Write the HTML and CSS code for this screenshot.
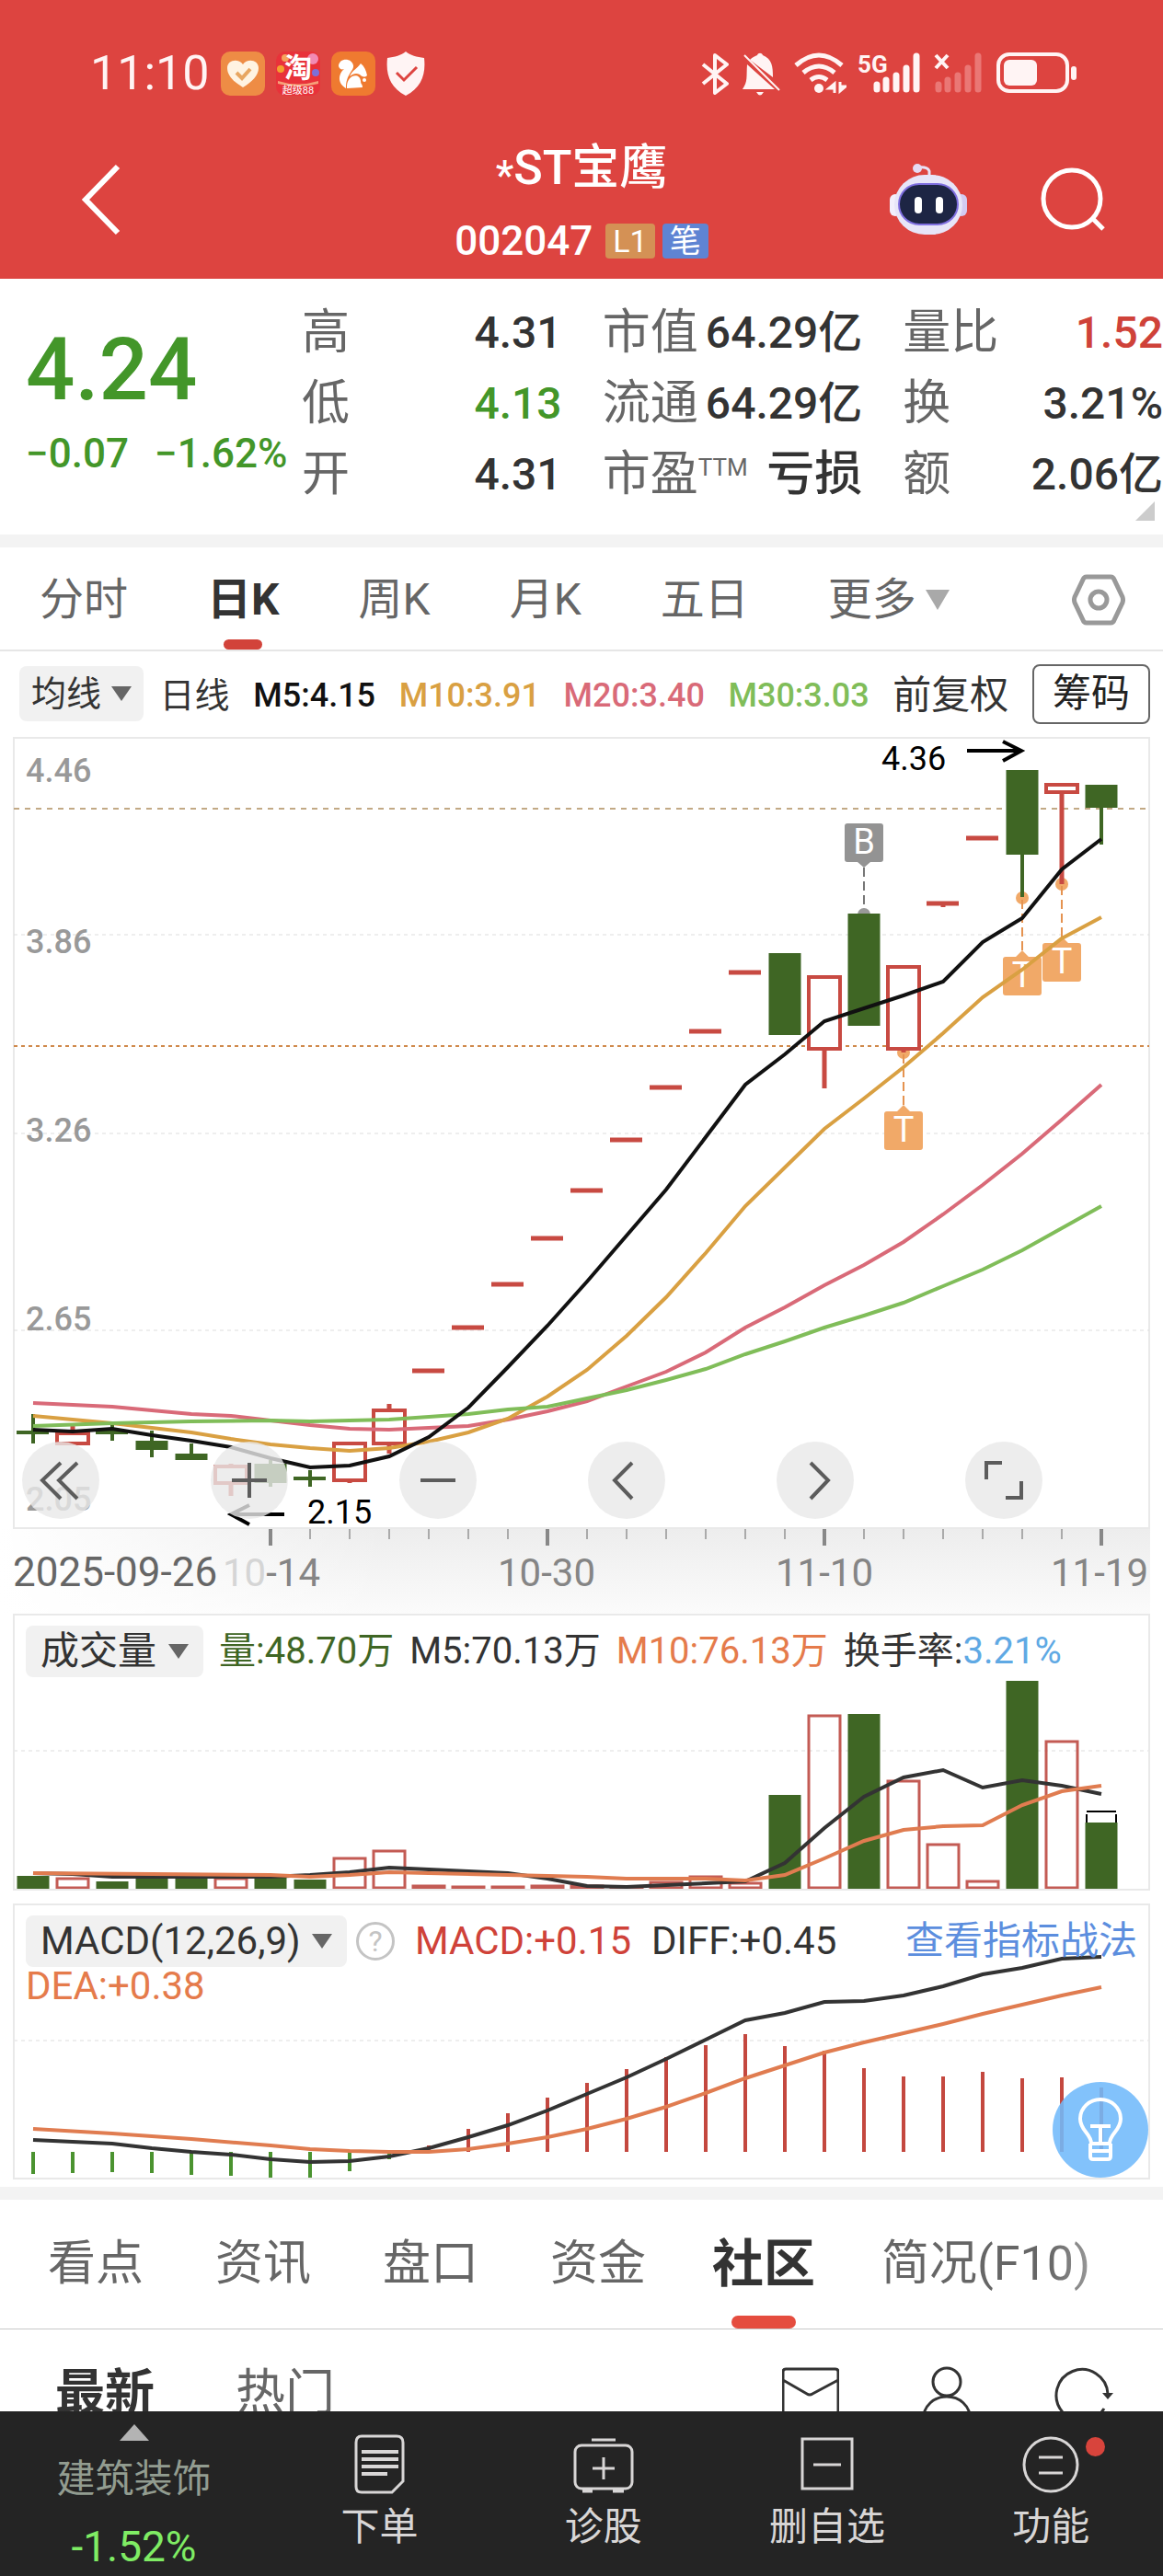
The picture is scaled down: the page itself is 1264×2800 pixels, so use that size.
FILE: index.html
```html
<!DOCTYPE html>
<html lang="zh-CN">
<head>
  <meta charset="UTF-8">
  <meta name="viewport" content="width=device-width, initial-scale=1">
  <title>*ST宝鹰 002047</title>
  <link rel="stylesheet" href="styles.css">
</head>
<body>
  <header class="top">
    <!-- phone status bar -->
    <div class="status">
      <div class="status-left">
        <span class="clock">11:10</span>
        <svg width="48" height="48" viewBox="0 0 48 48"><rect width="48" height="48" rx="10" fill="#ee8c45"/><path d="M24 39C14 33 7 26 7 18c0-9 12-11 17-4 5-7 17-5 17 4 0 8-7 15-17 21z" fill="#fff3e2"/><path d="M17 23l6 6 9-10" fill="none" stroke="#e8a661" stroke-width="4"/></svg>
        <svg width="48" height="48" viewBox="0 0 48 48"><rect width="48" height="48" rx="10" fill="#e8323a"/><circle cx="10" cy="7" r="4" fill="#f6a35c"/><circle cx="40" cy="8" r="6" fill="#f28bb4"/><circle cx="43" cy="23" r="4" fill="#7d6fd8"/><circle cx="5" cy="19" r="4" fill="#f5a02f"/><path d="M2 32q22 7 44 0v3q-22 6-44 0z" fill="#f6a079"/><text x="24" y="28" class="tao">淘</text><text x="24" y="46" class="tao-sub">超级88</text></svg>
        <svg width="48" height="48" viewBox="0 0 48 48"><rect width="48" height="48" rx="10" fill="#ef7a30"/><path d="M16 40C6 34 8 24 14 19c-3 1-5 0-6-3 0-9 14-10 16-1 1 6-8 9-8 25z" fill="#fff"/><path d="M20 27c3-7 8-8 12-14 4 3 6 8 7 13-3 3-6 1-8-1-4-2-7-1-11 2z" fill="#fff"/><path d="M17 40c-1-15 14-18 15-8 0 4 2 3 2 7z" fill="#fff"/><circle cx="36" cy="31" r="2" fill="#fff"/></svg>
        <svg width="42" height="48" viewBox="0 0 42 48"><path d="M21 0c5 4 12 6 20 7 2 18-3 32-20 41C4 39-1 25 1 7 9 6 16 4 21 0z" fill="#fff4f4"/><path d="M11 23l8 8 14-14" fill="none" stroke="#dd4440" stroke-width="3"/></svg>
      </div>
      <div class="status-right">
        <svg width="30" height="48" viewBox="764 55 30 48"><path d="M766 69l26 21-13 10V59l13 10-26 21" fill="none" stroke="#fff4f4" stroke-width="4" stroke-linejoin="round"/></svg>
        <svg width="44" height="48" viewBox="807 55 44 48"><path d="M814 69c-1 14 1 18-5 27h35zM817 64c3-3 6-4 8-5 1-3 5-3 6 0 10 4 11 12 11 24zM824 99h8q-4 7-8 0z" fill="#fff4f4"/><path d="M811 59l38 38" stroke="#fff4f4" stroke-width="2"/></svg>
        <svg width="58" height="48" viewBox="865 55 58 48"><g fill="none" stroke="#fff4f4" stroke-width="5"><path d="M868 70q25-22 50 0M876 78q17-14 34 0M884 86q9-7 18 0"/></g><circle cx="893" cy="95" r="5" fill="#fff4f4"/><path d="M910 100V90l-6 5h6M916 88v10l6-5h-6" fill="none" stroke="#fff4f4" stroke-width="3"/></svg>
        <svg width="68" height="48" viewBox="933 55 68 48"><text x="932" y="78" class="net">5G</text><path d="M953 91v5M963 86v10M974 81v15M985 73v23M996 60v36" stroke="#fff4f4" stroke-width="7" stroke-linecap="round"/></svg>
        <svg width="54" height="48" viewBox="1013 55 54 48"><path d="M1016 59l13 14M1029 59l-13 14" stroke="#fff4f4" stroke-width="4"/><path d="M1019 91v5M1029 86v10M1040 81v15M1051 73v23M1062 60v36" stroke="#ea7775" stroke-width="7" stroke-linecap="round"/></svg>
        <svg width="90" height="48" viewBox="1081 55 90 48"><rect x="1085" y="58" width="75" height="40" rx="12" fill="none" stroke="#fff4f4" stroke-width="4"/><rect x="1091" y="64" width="36" height="28" rx="6" fill="#fff4f4"/><rect x="1164" y="71" width="6" height="15" rx="3" fill="#fff4f4"/></svg>
      </div>
    </div>

    <div class="titlebar">
      <button class="back" aria-label="返回"><svg width="46" height="80" viewBox="0 0 46 80"><path d="M41 4L6 40l35 36" fill="none" stroke="#fff" stroke-width="6"/></svg></button>
      <div class="stock">
        <h1><small>*</small>ST宝鹰</h1>
        <div class="code"><span>002047</span><b class="badge gold">L1</b><b class="badge blue">笔</b></div>
      </div>
      <div class="title-actions">
        <button aria-label="智能助手"><svg width="86" height="80" viewBox="0 0 86 80">
          <path d="M44 16V9q-2-5-12-4" fill="none" stroke="#e9e2f6" stroke-width="3"/><circle cx="31" cy="6" r="5" fill="#e5daf3"/>
          <rect x="1" y="34" width="12" height="24" rx="6" fill="#f2effc"/><rect x="73" y="34" width="12" height="24" rx="6" fill="#d3cbf2"/>
          <rect x="6" y="13" width="74" height="65" rx="33" fill="#e7e5f8"/>
          <rect x="11" y="23" width="64" height="44" rx="22" fill="#1d2544" stroke="#7f6fe0" stroke-width="2"/>
          <rect x="28" y="37" width="8" height="18" rx="4" fill="#fff"/><rect x="51" y="37" width="8" height="18" rx="4" fill="#fff"/></svg></button>
        <button aria-label="搜索"><svg width="72" height="72" viewBox="0 0 72 72"><circle cx="35" cy="35" r="31" fill="none" stroke="#fff" stroke-width="5"/><path d="M57 56l12 12" stroke="#fff" stroke-width="5"/></svg></button>
      </div>
    </div>
  </header>

  <section class="quote">
    <div class="price">
      <strong>4.24</strong>
      <p><span>−0.07</span><span>−1.62%</span></p>
    </div>
    <dl>
      <div><dt>高</dt><dd>4.31</dd></div>
      <div><dt>低</dt><dd class="down">4.13</dd></div>
      <div><dt>开</dt><dd>4.31</dd></div>
    </dl>
    <dl>
      <div><dt>市值</dt><dd>64.29亿</dd></div>
      <div><dt>流通</dt><dd>64.29亿</dd></div>
      <div><dt>市盈<sup>TTM</sup></dt><dd class="loss">亏损</dd></div>
    </dl>
    <dl>
      <div><dt>量比</dt><dd class="up">1.52</dd></div>
      <div><dt>换</dt><dd>3.21%</dd></div>
      <div><dt>额</dt><dd>2.06亿</dd></div>
    </dl>
    <i class="corner"></i>
  </section>

  <nav class="periods">
    <button>分时</button>
    <button class="active">日K</button>
    <button>周K</button>
    <button>月K</button>
    <button>五日</button>
    <button>更多<svg width="26" height="22" viewBox="0 0 26 22"><path d="M0 0h26L13 22z" fill="#a9a9a9"/></svg></button>
    <button class="settings" aria-label="设置"><svg width="58" height="66" viewBox="0 0 58 66"><path d="M16 8h26q3 0 4 3l9 19q1 3 0 6l-9 19q-1 3-4 3H16q-3 0-4-3L3 36q-1-3 0-6l9-19q1-3 4-3z" fill="none" stroke="#999" stroke-width="5"/><circle cx="29" cy="33" r="9" fill="none" stroke="#999" stroke-width="5"/></svg></button>
  </nav>

  <div class="ma-legend">
    <span class="pill"><select aria-label="主图指标"><option>均线</option></select><svg width="22" height="16" viewBox="0 0 22 16"><path d="M0 0h22L11 16z" fill="#666"/></svg></span>
    <span class="period">日线</span>
    <span class="m5">M5:4.15</span>
    <span class="m10">M10:3.91</span>
    <span class="m20">M20:3.40</span>
    <span class="m30">M30:3.03</span>
    <span class="adjust">前复权</span>
    <button class="chips">筹码</button>
  </div>

  <!-- daily candles, 28 bars, 43 units apart -->
  <section class="kline">
    <svg class="plot" viewBox="0 800 1264 954">
      <defs>
        <linearGradient id="axisFade" x1="0" y1="0" x2="0" y2="1"><stop offset="0" stop-color="#ededed"/><stop offset="1" stop-color="#fbfbfb"/></linearGradient>
        <linearGradient id="leftFade"><stop offset="0" stop-color="#fff"/><stop offset="1" stop-color="#fff" stop-opacity="0"/></linearGradient>
      </defs>
      <rect x="0" y="1662" width="1250" height="92" fill="url(#axisFade)"/>
      <rect x="0" y="1662" width="420" height="92" fill="url(#leftFade)"/>
      <rect class="frame" x="15" y="802" width="1234" height="859"/>
      <path class="grid" d="M15 1016H1249M15 1232H1249M15 1446H1249"/>

      <g class="price-label">
        <text x="28" y="850">4.46</text>
        <text x="28" y="1036">3.86</text>
        <text x="28" y="1241">3.26</text>
        <text x="28" y="1446">2.65</text>
        <text x="28" y="1642">2.05</text>
      </g>

      <path d="M15 879H1249" stroke="#c2a985" stroke-width="2" stroke-dasharray="6 6"/>
      <path d="M15 1137H1249" stroke="#d08a4c" stroke-width="2" stroke-dasharray="4 4"/>

      <!-- trade marker stems -->
      <path d="M939 943V993" stroke="#777" stroke-width="2" stroke-dasharray="10 5"/>
      <circle cx="939" cy="994" r="7" fill="#999"/>
      <g fill="#f1a968"><circle cx="982" cy="1144" r="7"/><circle cx="1111" cy="976" r="7"/><circle cx="1154" cy="961" r="7"/></g>
      <path d="M982 1146V1201M1111 978V1033M1154 963V1019" stroke="#e59350" stroke-width="2" stroke-dasharray="10 5"/>

      <path class="body-down" d="M165 1566V1576M208 1580V1587M294 1591V1612M853 1036V1125M939 993V1115M1111 837V929M1197 853V878"/>
      <path class="wick-down" d="M18 1557H53M36 1537V1569M104 1557H139M122 1548V1566M165 1555V1584M208 1569V1580M294 1587V1616M319 1607H354M337 1598V1616M1111 929V975M1197 878V918"/>
      <path class="wick-up" d="M79 1549V1556M251 1591V1593M251 1612V1626M380 1610V1612M423 1526V1532M423 1570V1580M896 1141V1183M982 1141V1144M1025 982V986M1154 861V961"/>
      <path class="body-up" d="M62 1558h34v11H62zM234 1594h34v18h-34zM363 1569h34v40h-34zM406 1533h34v36h-34zM879 1062h34v78h-34zM965 1051h34v89h-34zM1137 853h34v8h-34z"/>
      <path class="wick-up" d="M448 1490h35M491 1443h35M534 1396h35M577 1346h35M620 1294h35M663 1239h35M706 1182h35M749 1121h35M792 1057h35M1007 982h35M1050 911h35"/>

      <g class="marker">
        <path d="M921 895h36q3 0 3 3v36q0 3-3 3h-11l-7 6-7-6h-11q-3 0-3-3v-36q0-3 3-3z" fill="#939393"/>
        <path d="M964 1208h11l7-7 7 7h11q3 0 3 3v36q0 3-3 3h-36q-3 0-3-3v-36q0-3 3-3z" fill="#f1a968"/>
        <path d="M1093 1040h11l7-7 7 7h11q3 0 3 3v36q0 3-3 3h-36q-3 0-3-3v-36q0-3 3-3z" fill="#f1a968"/>
        <path d="M1136 1025h11l7-7 7 7h11q3 0 3 3v36q0 3-3 3h-36q-3 0-3-3v-36q0-3 3-3z" fill="#f1a968"/>
        <text x="939" y="928">B</text>
        <text x="982" y="1241">T</text>
        <text x="1111" y="1073">T</text>
        <text x="1154" y="1058">T</text>
      </g>

      <polyline class="line m20" points="36,1525 79,1527 122,1529 165,1533 208,1537 251,1539 294,1544 337,1549 380,1553 423,1554 466,1552 509,1550 552,1543 595,1534 638,1523 681,1507 724,1491 767,1470 810,1443 853,1421 896,1397 939,1375 982,1350 1025,1320 1068,1288 1111,1254 1154,1217 1197,1179"/>
      <polyline class="line m10" points="36,1539 79,1543 122,1547 165,1552 208,1557 251,1564 294,1570 337,1574 380,1577 423,1574 466,1567 509,1557 552,1542 595,1518 638,1489 681,1452 724,1410 767,1362 810,1311 853,1269 896,1227 939,1194 982,1160 1025,1123 1068,1084 1111,1054 1154,1020 1197,997"/>
      <polyline class="line m30" points="36,1550 122,1547 208,1545 294,1544 337,1545 380,1544 423,1543 466,1540 509,1537 552,1532 595,1529 638,1520 681,1511 724,1500 767,1488 810,1472 853,1458 896,1443 939,1430 982,1416 1025,1398 1068,1380 1111,1359 1154,1335 1197,1311"/>
      <polyline class="line m5" points="36,1554 79,1556 122,1553 165,1560 208,1566 251,1573 294,1585 337,1595 380,1593 423,1583 466,1562 509,1530 552,1486 595,1441 638,1393 681,1343 724,1293 767,1236 810,1179 853,1146 896,1110 939,1096 982,1082 1025,1067 1068,1024 1111,998 1154,945 1197,912"/>

      <g class="extreme">
        <text x="958" y="837">4.36</text>
        <path d="M1051 816h58M1090 806l20 10-20 11"/>
        <text x="334" y="1656">2.15</text>
        <path d="M309 1646h-58M271 1636l-20 10 20 11"/>
      </g>

      <path d="M337 1662v11M380 1662v11M423 1662v11M466 1662v11M509 1662v11M552 1662v11M638 1662v11M681 1662v11M724 1662v11M767 1662v11M810 1662v11M853 1662v11M939 1662v11M982 1662v11M1025 1662v11M1068 1662v11M1111 1662v11M1154 1662v11" stroke="#aaa" stroke-width="2"/>
      <path d="M294 1662v18M595 1662v18M896 1662v18M1197 1662v18" stroke="#888" stroke-width="4"/>
      <g class="date-label">
        <text x="14" y="1724" class="first">2025-09-26</text>
        <text x="242" y="1724"><tspan fill="#d5d5d5">10</tspan><tspan>-14</tspan></text>
        <text x="541" y="1724">10-30</text>
        <text x="843" y="1724">11-10</text>
        <text x="1142" y="1724">11-19</text>
      </g>
    </svg>
    <div class="tools">
      <button aria-label="最左"><svg viewBox="0 0 84 84"><path d="M42 23L22 42l20 20M60 23L40 42l20 20"/></svg></button>
      <button aria-label="放大"><svg viewBox="0 0 84 84"><path d="M23 42h38M42 23v38"/></svg></button>
      <button aria-label="缩小"><svg viewBox="0 0 84 84"><path d="M23 42h38"/></svg></button>
      <button aria-label="左移"><svg viewBox="0 0 84 84"><path d="M48 23L29 42l19 20"/></svg></button>
      <button aria-label="右移"><svg viewBox="0 0 84 84"><path d="M37 23l19 19-19 20"/></svg></button>
      <button aria-label="全屏"><svg viewBox="0 0 84 84"><path d="M40 23H23v18M44 61h17V43"/></svg></button>
    </div>
  </section>

  <!-- volume -->
  <section class="panel">
    <svg class="plot" viewBox="16 1756 1232 297">
      <path class="grid" d="M15 1903H1249"/>
      <path class="body-down" d="M36 2039V2053M122 2045V2053M165 2041V2053M208 2041V2053M294 2041V2053M337 2043V2053M853 1951V2053M939 1863V2053M1111 1827V2053M1197 1981V2053"/>
      <path class="vol-up" d="M62 2042h34v10H62zM234 2042h34v10h-34zM363 2020h34v32h-34zM406 2012h34v40h-34zM449 2050h34v2h-34zM492 2051h34v1h-34zM535 2051h34v1h-34zM578 2050h34v2h-34zM621 2050h34v2h-34zM664 2051h34v1h-34zM707 2046h34v6h-34zM750 2040h34v12h-34zM793 2047h34v5h-34zM879 1865h34v187h-34zM965 1936h34v116h-34zM1008 2005h34v47h-34zM1051 2045h34v7h-34zM1137 1893h34v159h-34z"/>
      <path d="M1181 1969h32M1181 1981v-9M1213 1981v-9" fill="none" stroke="#000" stroke-width="2"/>
      <polyline class="line dark" points="36,2036 79,2037 122,2040 294,2040 337,2038 380,2035 423,2030 466,2032 509,2034 552,2036 595,2042 638,2050 681,2051 724,2049 767,2047 810,2045 853,2025 896,1987 939,1953 982,1932 1025,1924 1068,1943 1111,1935 1154,1941 1197,1950"/>
      <polyline class="line orange" points="36,2036 165,2037 294,2038 337,2040 380,2038 423,2035 466,2036 552,2038 638,2040 681,2042 767,2042 810,2044 853,2038 896,2020 939,2001 982,1989 1025,1985 1068,1984 1111,1962 1154,1947 1197,1941"/>
    </svg>
    <div class="legend volume">
      <span class="pill"><select aria-label="副图指标一"><option>成交量</option></select><svg width="22" height="16" viewBox="0 0 22 16"><path d="M0 0h22L11 16z" fill="#666"/></svg></span>
      <span class="vol">量:48.70万</span>
      <span>M5:70.13万</span>
      <span class="orange">M10:76.13万</span>
      <span>换手率:<em>3.21%</em></span>
    </div>
  </section>

  <!-- MACD -->
  <section class="panel macd">
    <svg class="plot" viewBox="16 2071 1232 296">
      <path class="grid" d="M15 2218H1249"/>
      <path d="M36 2339V2363M79 2339V2362M122 2339V2361M165 2339V2362M208 2339V2364M251 2339V2365M294 2339V2367M337 2339V2367M380 2339V2360M423 2339V2347" stroke="#4b9330" stroke-width="4"/>
      <path d="M466 2339V2332M509 2339V2314M552 2339V2297M595 2339V2280M638 2339V2264M681 2339V2249M724 2339V2236M767 2339V2223M810 2339V2211M853 2339V2224M896 2339V2229M939 2339V2248M982 2339V2257M1025 2339V2257M1068 2339V2252M1111 2339V2259M1154 2339V2258M1197 2339V2269" stroke="#c4483f" stroke-width="4"/>
      <polyline class="line dark" points="36,2326 79,2328 122,2330 165,2335 208,2339 251,2342 294,2347 337,2350 380,2349 423,2344 466,2335 509,2323 552,2310 595,2294 638,2276 681,2258 724,2238 767,2217 810,2196 853,2188 896,2176 939,2175 982,2169 1025,2159 1068,2146 1111,2139 1154,2129 1197,2127"/>
      <polyline class="line orange" points="36,2314 122,2319 208,2325 294,2332 337,2336 380,2338 423,2339 466,2339 509,2336 552,2330 595,2323 638,2314 681,2303 724,2290 767,2275 810,2259 853,2245 896,2231 939,2220 982,2210 1025,2200 1068,2189 1111,2179 1154,2169 1197,2160"/>
    </svg>
    <div class="legend">
      <span class="pill"><select aria-label="副图指标二"><option>MACD(12,26,9)</option></select><svg width="22" height="16" viewBox="0 0 22 16"><path d="M0 0h22L11 16z" fill="#666"/></svg></span>
      <button class="help" aria-label="说明">?</button>
      <span class="up">MACD:+0.15</span>
      <span>DIFF:+0.45</span>
      <a href="#">查看指标战法</a>
      <span class="dea">DEA:+0.38</span>
    </div>
    <button class="bulb" aria-label="提示"><svg width="48" height="70" viewBox="0 0 48 70"><g fill="none" stroke="#fff" stroke-width="4"><path d="M14 50c0-11-12-14-12-27a22 21 0 0 1 44 0c0 13-12 16-12 27z"/><path d="M13 50v14q0 3 3 3h16q3 0 3-3V50M14 58h20M24 50V31M13 31h22"/></g></svg></button>
  </section>

  <nav class="sections">
    <a href="#">看点</a>
    <a href="#">资讯</a>
    <a href="#">盘口</a>
    <a href="#">资金</a>
    <a href="#" class="active">社区</a>
    <a href="#" class="last">简况(F10)</a>
  </nav>

  <div class="feed-bar">
    <button class="active">最新</button>
    <button>热门</button>
    <div class="feed-icons">
      <svg width="62" height="60" viewBox="0 0 62 60"><path d="M1 58V6q0-3 3-3h54q3 0 3 3v52zM1 15l26 15q3 2 6 0l28-15" fill="none" stroke="#333" stroke-width="3"/></svg>
      <svg width="56" height="64" viewBox="0 0 56 64"><circle cx="28" cy="17" r="15" fill="none" stroke="#333" stroke-width="3"/><path d="M2 60c0-36 52-36 52 0" fill="none" stroke="#333" stroke-width="3"/></svg>
      <svg width="66" height="64" viewBox="0 0 66 64"><path d="M58 30A28 28 0 1 0 54 46" fill="none" stroke="#333" stroke-width="3"/><path d="M52 29h12l-6 7z" fill="#333"/></svg>
    </div>
  </div>

  <footer class="bottom">
    <button class="sector">
      <svg width="32" height="18" viewBox="0 0 32 18"><path d="M16 0l16 18H0z" fill="#b3b3b3"/></svg>
      <span>建筑装饰</span>
      <strong>-1.52%</strong>
    </button>
    <button><svg width="66" height="66" viewBox="0 0 66 66"><g fill="none" stroke="#d8d6d6"><path d="M13 2h38q7 0 7 7v42L46 63H13q-6 0-6-6V9q0-7 6-7z" stroke-width="3"/><path d="M13 19h40M13 27h40M13 35h40M13 43h28" stroke-width="4"/></g></svg><span>下单</span></button>
    <button><svg width="66" height="66" viewBox="0 0 66 66"><g fill="none" stroke="#d8d6d6" stroke-width="3"><rect x="2" y="12" width="62" height="47" rx="7"/><path d="M20 6h26M33 25v24M21 37h24"/><path d="M10 61h11M43 61h12" stroke-width="5"/></g></svg><span>诊股</span></button>
    <button><svg width="66" height="66" viewBox="0 0 66 66"><g fill="none" stroke="#d8d6d6" stroke-width="3"><path d="M6 5h54v54H6zM18 33h30"/></g></svg><span>删自选</span></button>
    <button class="dot"><svg width="66" height="66" viewBox="0 0 66 66"><g fill="none" stroke="#d8d6d6" stroke-width="3"><circle cx="33" cy="33" r="29"/><path d="M20 25h26M20 42h26"/></g></svg><span>功能</span></button>
  </footer>
</body>
</html>
```

FILE: styles.css
```css
* {
  box-sizing: border-box;
}

body {
  margin: 0;
  background: #fff;
  color: #333;
  font-family: Roboto, "Noto Sans CJK SC", sans-serif;
  font-size: 40px;
  line-height: 1;
}

svg {
  display: block;
  flex: none;
}

button, select {
  border: none;
  background: none;
  padding: 0;
  margin: 0;
  color: inherit;
  font: inherit;
  cursor: pointer;
}

a {
  color: inherit;
  text-decoration: none;
}

.up { color: #cf4239; }
.down { color: #439629; }

/* header */
.top {
  background: #dd4440;
  color: #fff;
  padding-bottom: 19px;
}

.status {
  display: flex;
  justify-content: space-between;
  align-items: center;
  padding: 52px 93px 0 98px;
  height: 108px;
}

.status-left, .status-right {
  display: flex;
  align-items: center;
  gap: 12px;
}

.status-right {
  gap: 13px;
}

.clock {
  font-size: 52px;
  color: #fff4f4;
}

.tao {
  font-size: 30px;
  font-weight: bold;
  fill: #fff;
  text-anchor: middle;
}

.tao-sub {
  font-size: 11px;
  fill: #fff;
  text-anchor: middle;
}

.net {
  font-size: 26px;
  font-weight: bold;
  fill: #fff4f4;
}

.titlebar {
  display: grid;
  grid-template-columns: 1fr auto 1fr;
  align-items: center;
  padding: 44px 62px 2px;
}

.back {
  justify-self: start;
  padding-left: 25px;
}

.stock {
  text-align: center;
}

h1 {
  margin: 0;
  font-size: 52px;
  line-height: 62px;
  font-weight: 500;
}

h1 small {
  font-size: 44px;
  vertical-align: -6px;
  line-height: 1;
}

.code {
  display: flex;
  justify-content: center;
  align-items: center;
  gap: 8px;
  margin-top: 28px;
  font-size: 44px;
  line-height: 40px;
  font-weight: 500;
}

.badge {
  min-width: 50px;
  padding: 0 8px;
  border-radius: 4px;
  font-size: 34px;
  line-height: 38px;
  font-weight: normal;
}

.gold { background: #d49155; margin-left: 6px; }
.blue { background: #5f84d3; }

.title-actions {
  display: flex;
  justify-content: flex-end;
  align-items: center;
  gap: 78px;
}

/* quote */
.quote {
  position: relative;
  display: grid;
  grid-template-columns: 284px 1fr 1fr 1fr;
  gap: 44px;
  padding: 20px 0 27px;
  border-bottom: 14px solid #f3f3f3;
}

.price {
  padding: 35px 0 0 28px;
  color: #439629;
  white-space: nowrap;
}

.price strong {
  font-size: 94px;
  line-height: 88px;
  font-weight: 500;
}

.price p {
  display: flex;
  gap: 28px;
  margin: 25px 0 0;
  font-size: 44px;
  font-weight: 500;
}

dl {
  margin: 0;
}

dl div {
  display: flex;
  justify-content: space-between;
  align-items: center;
  line-height: 77px;
  white-space: nowrap;
}

dt {
  color: #666;
  font-size: 52px;
}

dd {
  margin: 0;
  font-size: 48px;
  font-weight: 500;
}

.loss {
  font-size: 52px;
}

sup {
  font-size: 26px;
  line-height: 1;
  vertical-align: 16px;
}

.corner {
  position: absolute;
  right: 9px;
  bottom: 15px;
  border-left: 21px solid transparent;
  border-bottom: 21px solid #ccc;
}

/* period tabs */
.periods {
  display: flex;
  align-items: stretch;
  gap: 86px;
  height: 113px;
  padding: 2px 41px 0 43px;
  border-bottom: 2px solid #e6e6e6;
  color: #666;
  font-size: 48px;
}

.periods button {
  display: flex;
  align-items: center;
  gap: 10px;
  white-space: nowrap;
}

.periods .settings {
  margin-left: auto;
}

.active {
  color: #333;
  font-weight: bold;
}

.periods .active, .sections .active {
  position: relative;
}

.periods .active::after, .sections .active::after {
  content: "";
  position: absolute;
  left: 50%;
  bottom: 0;
  width: 42px;
  height: 11px;
  margin-left: -21px;
  border-radius: 6px;
  background: #d2433a;
}

.ma-legend {
  display: flex;
  justify-content: space-between;
  align-items: center;
  height: 92px;
  padding: 0 14px 0 21px;
  font-size: 36px;
  font-weight: 500;
  white-space: nowrap;
}

.pill {
  display: flex;
  align-items: center;
  gap: 12px;
  height: 56px;
  padding: 0 16px;
  border-radius: 8px;
  background: #f1f1f1;
}

.pill select {
  appearance: none;
  line-height: 56px;
}

.ma-legend .pill {
  gap: 10px;
  height: 60px;
  padding: 0 13px;
  font-size: 38px;
  font-weight: normal;
}

.ma-legend > span:not(.pill) {
  padding-top: 4px;
}

.ma-legend .period {
  margin-left: -8px;
  font-size: 38px;
  font-weight: normal;
}

.ma-legend .adjust {
  font-size: 42px;
  font-weight: normal;
}

.m5 { color: #111; }
.m10 { color: #d9a042; }
.m20 { color: #d96a78; }
.m30 { color: #80bd59; }

.chips {
  height: 65px;
  padding: 0 20px;
  border: 2px solid #666;
  border-radius: 8px;
  color: #222;
  font-size: 42px;
  font-weight: normal;
}

/* charts */
.kline, .panel {
  display: grid;
}

.plot, .tools, .legend, .bulb {
  grid-area: 1 / 1;
}

.plot {
  width: 100%;
  height: auto;
}

.frame {
  fill: none;
  stroke: #e9e9e9;
  stroke-width: 2;
}

.grid {
  stroke: #ddd;
  stroke-width: 1;
  stroke-dasharray: 4 4;
}

.line {
  fill: none;
  stroke: currentColor;
  stroke-width: 4;
}

.line.dark { stroke: #333; }
.line.orange { stroke: #e07c50; }

.body-down { stroke: #3f6624; stroke-width: 35; }
.wick-down { stroke: #3f6624; stroke-width: 4; }
.wick-up { stroke: #c84a42; stroke-width: 5; }
.body-up { fill: #fff; stroke: #c84a42; stroke-width: 4; }
.vol-up { fill: none; stroke: #c35b54; stroke-width: 3; }

.price-label {
  fill: #999;
  font-size: 36px;
  font-weight: 500;
}

.marker text {
  fill: #fff;
  font-size: 38px;
  text-anchor: middle;
}

.extreme text {
  fill: #000;
  font-size: 36px;
}

.extreme path {
  fill: none;
  stroke: #000;
  stroke-width: 4;
}

.date-label {
  fill: #858585;
  font-size: 42px;
}

.date-label .first {
  fill: #666;
  font-size: 44px;
}

.tools {
  align-self: end;
  display: flex;
  justify-content: space-between;
  padding: 0 131px 103px 24px;
}

.tools button {
  width: 84px;
  height: 84px;
  border-radius: 50%;
  background: rgba(232, 232, 232, 0.8);
}

.tools path {
  fill: none;
  stroke: #5c5c5c;
  stroke-width: 4;
}

.panel {
  margin: 0 14px 14px;
  border: 2px solid #e9e9e9;
}

.legend {
  align-self: start;
  display: flex;
  flex-wrap: wrap;
  align-items: center;
  padding: 11px 12px 0;
  font-size: 42px;
  white-space: nowrap;
}

.volume {
  column-gap: 17px;
  font-size: 40px;
}

.volume .pill {
  font-size: 42px;
}

.vol { color: #3f6624; }
.orange { color: #e57b4b; }

.volume em {
  color: #5fa9e4;
  font-style: normal;
}

.macd {
  margin-bottom: 8px;
}

.macd .legend {
  column-gap: 22px;
}

.help {
  width: 42px;
  height: 42px;
  margin: 0 0 0 -12px;
  border: 3px solid #c4c4c4;
  border-radius: 50%;
  color: #c4c4c4;
  font-size: 32px;
  line-height: 36px;
}

.legend a {
  margin-left: auto;
  color: #5c8ede;
}

.dea {
  width: 100%;
  color: #e57b4b;
}

.bulb {
  place-self: end;
  display: flex;
  justify-content: center;
  align-items: center;
  width: 104px;
  height: 104px;
  border-radius: 50%;
  background: rgba(113, 185, 250, 0.88);
}

/* section tabs */
.sections {
  display: flex;
  gap: 78px;
  padding-left: 52px;
  border-top: 14px solid #f3f3f3;
  border-bottom: 1px solid #c8c8c8;
  color: #666;
  font-size: 52px;
  line-height: 140px;
  white-space: nowrap;
}

.sections .active {
  margin: 0 -6px;
  font-size: 56px;
}

.sections .active::after {
  width: 70px;
  height: 14px;
  margin-left: -35px;
  border-radius: 7px;
  background: #e54d3f;
}

.sections .last {
  background: linear-gradient(90deg, #666 80%, #999);
  background-clip: text;
  color: transparent;
}

.feed-bar {
  display: flex;
  align-items: flex-start;
  gap: 88px;
  padding: 40px 52px 0 60px;
  color: #666;
  font-size: 54px;
}

.feed-bar button {
  padding-top: 3px;
}

.feed-icons {
  display: flex;
  gap: 89px;
  margin-left: auto;
}

/* bottom bar stays over the feed */
.bottom {
  position: fixed;
  left: 0;
  right: 0;
  bottom: 0;
  display: grid;
  grid-template-columns: 291px repeat(4, 1fr);
  height: 179px;
  background: #242424;
  color: #d8d6d6;
  font-size: 42px;
}

.bottom button {
  display: flex;
  flex-direction: column;
  align-items: center;
  padding-top: 25px;
  gap: 14px;
}

.bottom .sector {
  padding-top: 14px;
  gap: 21px;
  color: #929c90;
}

.sector strong {
  margin-top: 8px;
  color: #7fec64;
  font-size: 46px;
  font-weight: normal;
}

.dot {
  position: relative;
}

.dot::after {
  content: "";
  position: absolute;
  top: 28px;
  left: 50%;
  width: 21px;
  height: 21px;
  margin-left: 38px;
  border-radius: 50%;
  background: #d8443c;
}
```
